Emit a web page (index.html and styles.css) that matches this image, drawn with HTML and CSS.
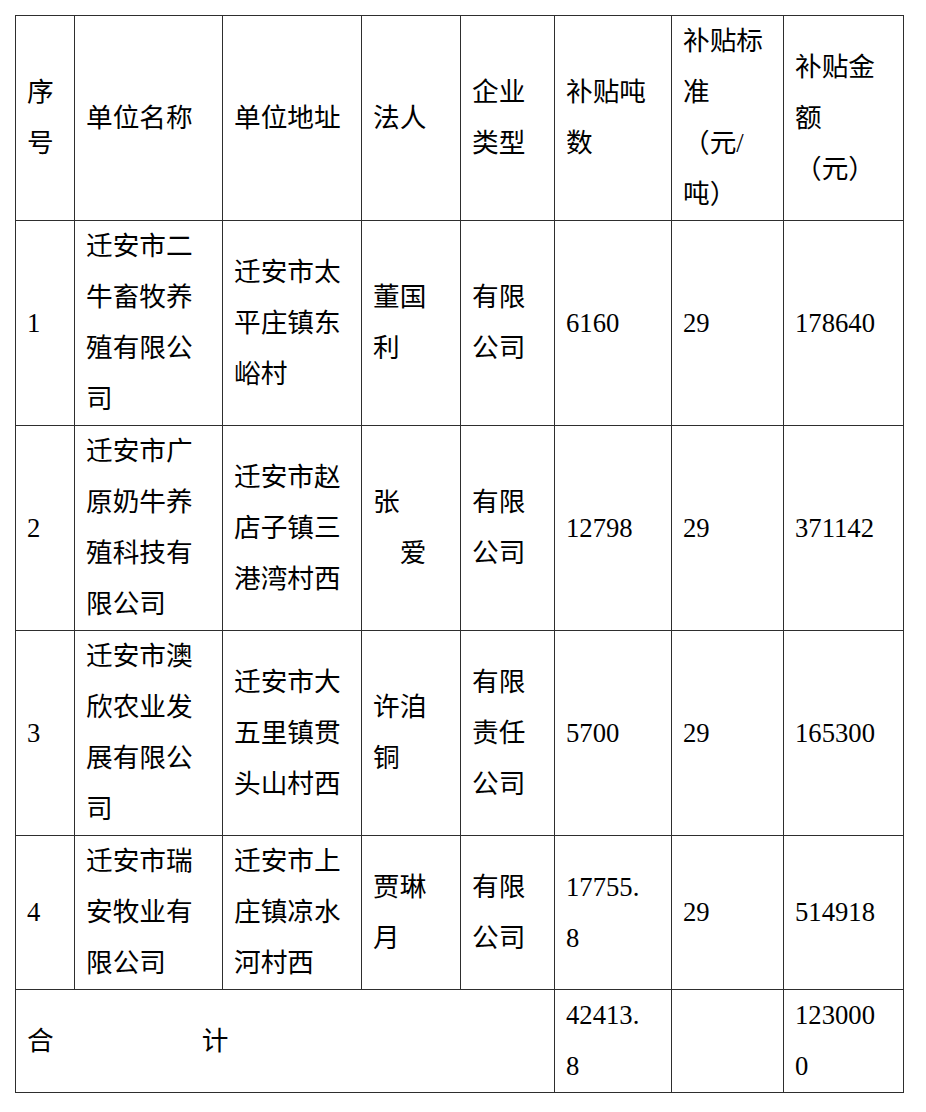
FILE: index.html
```html
<!DOCTYPE html>
<html lang="zh-CN">
<head>
<meta charset="utf-8">
<title>补贴表</title>
<link rel="stylesheet" href="styles.css">
</head>
<body>
<div class="page">
<table class="grid">
  <colgroup>
    <col class="c1"><col class="c2"><col class="c3"><col class="c4">
    <col class="c5"><col class="c6"><col class="c7"><col class="c8">
  </colgroup>
  <tbody>
    <tr class="r-head">
      <td>序号</td>
      <td>单位名称</td>
      <td>单位地址</td>
      <td>法人</td>
      <td>企业类型</td>
      <td>补贴吨数</td>
      <td>补贴标准<br>（元/吨）</td>
      <td>补贴金额<br>（元）</td>
    </tr>
    <tr class="r-tall">
      <td>1</td>
      <td>迁安市二牛畜牧养殖有限公司</td>
      <td>迁安市太平庄镇东峪村</td>
      <td>董国利</td>
      <td>有限公司</td>
      <td>6160</td>
      <td>29</td>
      <td>178640</td>
    </tr>
    <tr class="r-tall">
      <td>2</td>
      <td>迁安市广原奶牛养殖科技有限公司</td>
      <td>迁安市赵店子镇三港湾村西</td>
      <td>张<br><span class="indent">爱</span></td>
      <td>有限公司</td>
      <td>12798</td>
      <td>29</td>
      <td>371142</td>
    </tr>
    <tr class="r-tall">
      <td>3</td>
      <td>迁安市澳欣农业发展有限公司</td>
      <td>迁安市大五里镇贯头山村西</td>
      <td>许洎铜</td>
      <td>有限责任公司</td>
      <td>5700</td>
      <td>29</td>
      <td>165300</td>
    </tr>
    <tr class="r-mid">
      <td>4</td>
      <td>迁安市瑞安牧业有限公司</td>
      <td>迁安市上庄镇凉水河村西</td>
      <td>贾琳月</td>
      <td>有限公司</td>
      <td>17755.<br>8</td>
      <td>29</td>
      <td>514918</td>
    </tr>
    <tr class="r-sum">
      <td colspan="5">合<span class="gap"></span>计</td>
      <td>42413.<br>8</td>
      <td></td>
      <td>123000<br>0</td>
    </tr>
  </tbody>
</table>
</div>
</body>
</html>
```

FILE: styles.css
```css
html, body {
  margin: 0;
  padding: 0;
  background: #ffffff;
}

.page {
  padding: 15px 0 0 15px;
}

.grid {
  border-collapse: collapse;
  table-layout: fixed;
  width: 888px;
  font-family: "Liberation Serif", "Noto Sans CJK SC", serif;
  font-size: 26.67px;
  line-height: 51px;
  color: #000000;
}

.c1 { width: 59px; }
.c2 { width: 148px; }
.c3 { width: 139px; }
.c4 { width: 99px; }
.c5 { width: 94px; }
.c6 { width: 117px; }
.c7 { width: 112px; }
.c8 { width: 120px; }

.grid td {
  border: 1px solid #2e2e2e;
  padding: 0 15px 0 11px;
  vertical-align: middle;
  text-align: left;
  word-break: break-all;
  overflow-wrap: anywhere;
  font-weight: 400;
}

.r-head td,
.r-tall td { height: 204px; }
.r-mid td { height: 153px; }
.r-sum td { height: 102px; }

.indent {
  padding-left: 1em;
}

.gap {
  display: inline-block;
  width: 148px;
}
```
